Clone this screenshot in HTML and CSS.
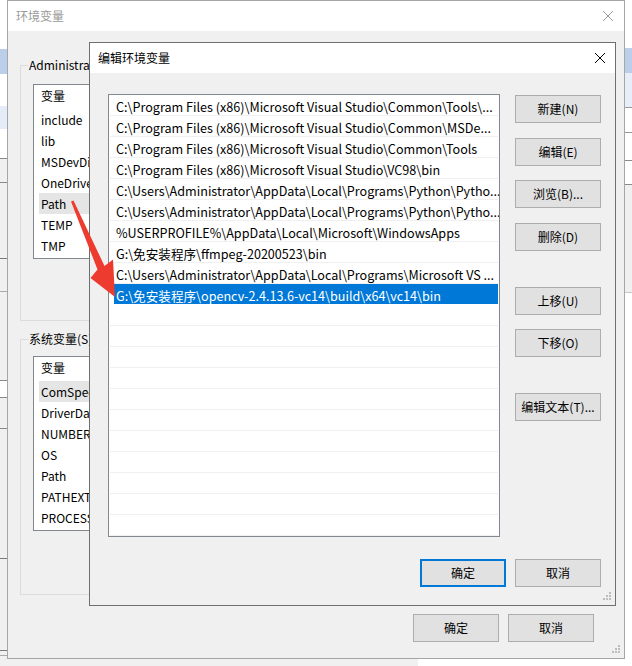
FILE: index.html
```html
<!DOCTYPE html>
<html lang="zh-CN">
<head>
<meta charset="utf-8">
<title>编辑环境变量</title>
<link rel="stylesheet" href="styles.css">
</head>
<body>
<div class="desk">
  <div class="strip strip-left"></div>
  <div class="strip strip-right"></div>
  <div class="strip strip-bottom"></div>

  <div class="win bgwin">
    <div class="titlebar">
      <span class="title">环境变量</span>
      <svg class="close" width="12" height="12" viewBox="0 0 12 12"><path d="M1 1L11 11M11 1L1 11"/></svg>
    </div>
    <div class="body">
      <fieldset class="group g1">
        <legend>Administrator 的用户变量(U)</legend>
        <div class="lv">
          <div class="lv-head">变量</div>
          <div class="lv-row">include</div>
          <div class="lv-row">lib</div>
          <div class="lv-row">MSDevDir</div>
          <div class="lv-row">OneDrive</div>
          <div class="lv-row hot">Path</div>
          <div class="lv-row">TEMP</div>
          <div class="lv-row">TMP</div>
        </div>
      </fieldset>
      <fieldset class="group g2">
        <legend>系统变量(S)</legend>
        <div class="lv">
          <div class="lv-head">变量</div>
          <div class="lv-row hot">ComSpec</div>
          <div class="lv-row">DriverData</div>
          <div class="lv-row">NUMBER_OF_PROCESSORS</div>
          <div class="lv-row">OS</div>
          <div class="lv-row">Path</div>
          <div class="lv-row">PATHEXT</div>
          <div class="lv-row">PROCESSOR_ARCHITECTURE</div>
        </div>
      </fieldset>
      <div class="footer bg-footer">
        <button class="btn">确定</button>
        <button class="btn">取消</button>
      </div>
    </div>
    <svg class="grip" width="10" height="10" viewBox="0 0 10 10"><path d="M7 0h2v2H7zM4 3h2v2H4zM7 3h2v2H7zM1 6h2v2H1zM4 6h2v2H4zM7 6h2v2H7z"/></svg>
  </div>

  <div class="win dlg">
    <div class="titlebar">
      <span class="title">编辑环境变量</span>
      <svg class="close" width="12" height="12" viewBox="0 0 12 12"><path d="M1 1L11 11M11 1L1 11"/></svg>
    </div>
    <div class="body dlg-body">
      <div class="main">
        <div class="lb">
          <div class="lb-row">C:\Program Files (x86)\Microsoft Visual Studio\Common\Tools\...</div>
          <div class="lb-row">C:\Program Files (x86)\Microsoft Visual Studio\Common\MSDe...</div>
          <div class="lb-row">C:\Program Files (x86)\Microsoft Visual Studio\Common\Tools</div>
          <div class="lb-row">C:\Program Files (x86)\Microsoft Visual Studio\VC98\bin</div>
          <div class="lb-row">C:\Users\Administrator\AppData\Local\Programs\Python\Pytho...</div>
          <div class="lb-row">C:\Users\Administrator\AppData\Local\Programs\Python\Pytho...</div>
          <div class="lb-row">%USERPROFILE%\AppData\Local\Microsoft\WindowsApps</div>
          <div class="lb-row">G:\免安装程序\ffmpeg-20200523\bin</div>
          <div class="lb-row">C:\Users\Administrator\AppData\Local\Programs\Microsoft VS ...</div>
          <div class="lb-row sel">G:\免安装程序\opencv-2.4.13.6-vc14\build\x64\vc14\bin</div>
          <div class="lb-row"></div>
          <div class="lb-row"></div>
          <div class="lb-row"></div>
          <div class="lb-row"></div>
          <div class="lb-row"></div>
          <div class="lb-row"></div>
          <div class="lb-row"></div>
          <div class="lb-row"></div>
          <div class="lb-row"></div>
          <div class="lb-row"></div>
          <div class="lb-row"></div>
        </div>
        <div class="side">
          <button class="btn">新建(N)</button>
          <button class="btn m15">编辑(E)</button>
          <button class="btn m14">浏览(B)...</button>
          <button class="btn m15">删除(D)</button>
          <button class="btn m36">上移(U)</button>
          <button class="btn m14">下移(O)</button>
          <button class="btn m36">编辑文本(T)...</button>
        </div>
      </div>
      <div class="footer dlg-footer">
        <button class="btn default">确定</button>
        <button class="btn">取消</button>
      </div>
    </div>
    <svg class="grip" width="10" height="10" viewBox="0 0 10 10"><path d="M7 0h2v2H7zM4 3h2v2H4zM7 3h2v2H7zM1 6h2v2H1zM4 6h2v2H4zM7 6h2v2H7z"/></svg>
  </div>

  <svg class="arrow" width="632" height="666" viewBox="0 0 632 666">
    <polygon points="71,201.5 73.5,200.5 104.5,266 113,259.5 115,297 90.5,278 97.5,269.5"/>
  </svg>
</div>
</body>
</html>
```

FILE: styles.css
```css
* { box-sizing: border-box; }
html, body { margin: 0; padding: 0; }
body {
  background: #ffffff;
  font-family: "Noto Sans CJK SC", "Noto Sans", sans-serif;
  font-size: 12px;
  color: #000;
}
.desk {
  position: relative;
  width: 632px;
  height: 666px;
  overflow: hidden;
  background: #ffffff;
}

/* pieces of windows behind */
.strip { position: absolute; }
.strip-left {
  left: 0; top: 0; width: 8px; height: 666px;
  background: linear-gradient(to bottom,
    #ffffff 0 49px, #bccfea 49px 74px, #ffffff 74px 106px, #e4ecf8 106px 129px,
    #ffffff 129px 158px, #8a8a8a 158px 159px, #f0f0f0 159px 182px, #8a8a8a 182px 183px,
    #f0f0f0 183px 258px, #7a7a7a 258px 259px, #f0f0f0 259px 291px, #aaaaaa 291px 292px,
    #f0f0f0 292px 380px, #8a8a8a 380px 381px, #ffffff 381px 397px, #8a8a8a 397px 398px,
    #f0f0f0 398px 428px, #8a8a8a 428px 429px, #f0f0f0 429px 558px, #7a7a7a 558px 559px,
    #f0f0f0 559px 650px, #7a7a7a 650px 651px, #f0f0f0 651px 655px, #aaaaaa 655px 656px, #f0f0f0 656px);
}
.strip-right {
  left: 624px; top: 0; width: 8px; height: 666px;
  background: linear-gradient(to bottom,
    #ffffff 0 48px, #bccfea 48px 73px, #e6eef9 73px 107px, #9a9a9a 107px 108px,
    #ffffff 108px 132px, #9a9a9a 132px 133px, #ffffff 133px 160px, #8a8a8a 160px 161px,
    #ffffff 161px 184px, #8a8a8a 184px 185px, #f0f0f0 185px 292px, #c8c8c8 292px 293px, #ffffff 293px);
}
.strip-bottom {
  left: 0; top: 658px; width: 418px; height: 8px;
  background: #f0f0f0;
}

/* windows */
.win {
  position: absolute;
  display: flex;
  flex-direction: column;
  background: #f0f0f0;
}
.titlebar {
  height: 30px;
  flex: none;
  background: #ffffff;
  display: flex;
  align-items: center;
  justify-content: space-between;
  padding: 0 8px 0 8px;
}
.title { font-size: 12px; line-height: 16px; }
.close path { stroke: #000; stroke-width: 1; fill: none; }
.grip { position: absolute; fill: #bdbdbd; }

.bgwin {
  left: 7px; top: 0; width: 618px; height: 659px;
  border: 1px solid #a6a6a6;
}
.bgwin .titlebar { padding: 0 10px 0 8px; }
.bgwin .title { color: #9a9a9a; }
.bgwin .close path { stroke: #a0a0a0; }
.bgwin .grip { right: 3px; bottom: 3px; }
.bgwin .body { padding: 0 30px 0 12px; display: flex; flex-direction: column; }

.group {
  margin: 0;
  border: 1px solid #dcdcdc;
  padding: 11px 12px 0 12px;
  min-width: 0;
}
.group legend {
  padding: 0 1px;
  margin-left: -5px;
  line-height: 16px;
  font-size: 12px;
  white-space: nowrap;
}
.g1 { margin-top: 26px; height: 264px; }
.g2 { margin-top: 10px; height: 264px; padding-top: 9px; }

.lv {
  height: 175px;
  background: #ffffff;
  border: 1px solid #828790;
  padding: 0 5px;
  overflow: hidden;
}
.lv-head { height: 24px; line-height: 22px; padding-left: 2px; }
.lv-row { height: 21px; line-height: 21px; padding-left: 2px; white-space: nowrap; }
.lv-row.hot { background: #e5e5e5; }

.footer { display: flex; justify-content: flex-end; gap: 9px; }
.bg-footer { margin-top: 19px; }

.btn {
  width: 86px;
  height: 28px;
  margin: 0;
  padding: 0;
  background: #e1e1e1;
  border: 1px solid #adadad;
  font-family: inherit;
  font-size: 12px;
  color: #000;
  line-height: 16px;
}
.btn.default { border: 2px solid #0078d7; }

/* front dialog */
.dlg {
  left: 89px; top: 42px; width: 527px; height: 564px;
  border: 1px solid #6f6f6f;
}
.dlg .titlebar { padding: 0 9px 0 8px; }
.dlg .grip { right: 3px; bottom: 3px; }
.dlg-body { padding: 21px 14px 0 18px; }
.main { display: flex; gap: 15px; }
.lb {
  width: 392px;
  height: 443px;
  background: #ffffff;
  border: 1px solid #828790;
  padding: 0 1px;
  overflow: hidden;
}
.lb-row {
  height: 21px;
  line-height: 23px;
  font-size: 12.6px;
  padding-left: 6px;
  border-bottom: 1px solid #f0f0f0;
  white-space: nowrap;
}
.lb-row.sel {
  background: linear-gradient(to right, transparent 4px, #0078d7 4px);
  color: #ffffff;
  border-bottom-color: #ffffff;
}
.side { display: flex; flex-direction: column; padding-top: 1px; }
.m14 { margin-top: 14px; }
.m15 { margin-top: 15px; }
.m36 { margin-top: 36px; }
.dlg-footer { margin-top: 22px; }

.arrow { position: absolute; left: 0; top: 0; pointer-events: none; }
.arrow polygon { fill: #ee3b30; }
```
